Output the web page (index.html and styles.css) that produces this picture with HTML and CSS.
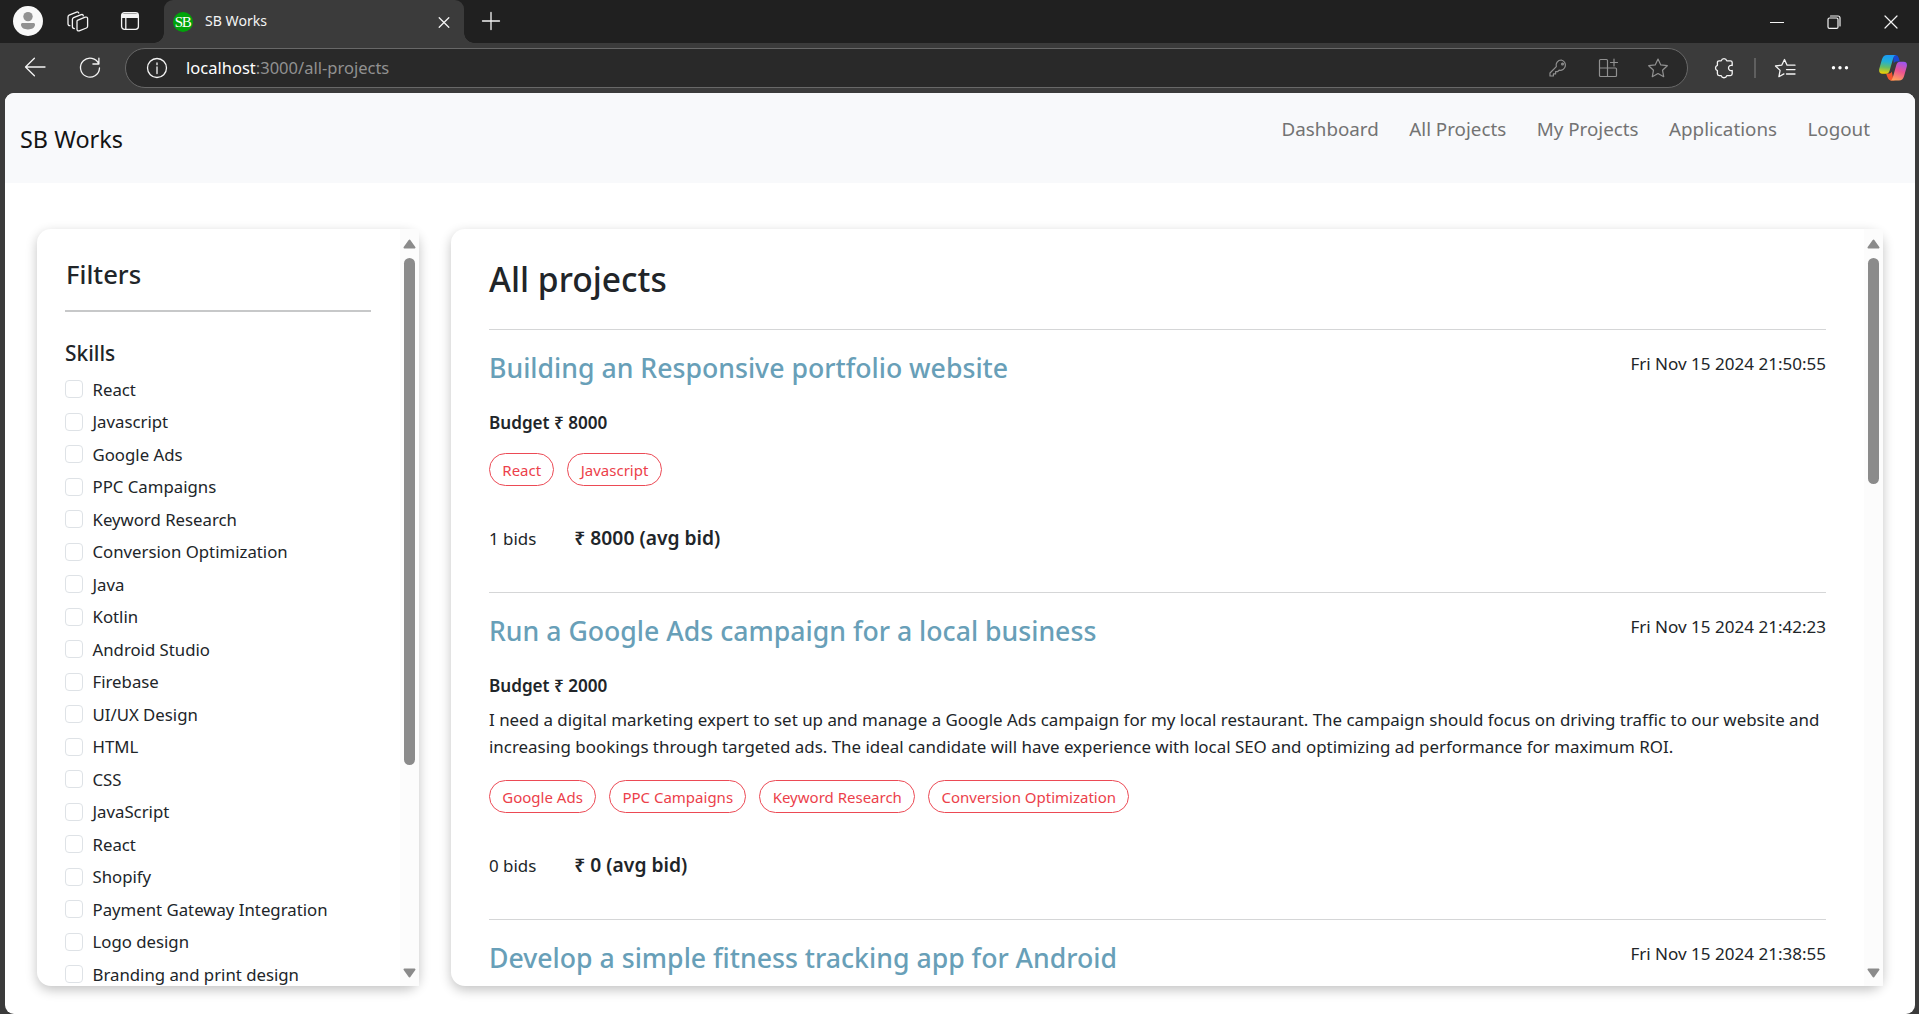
FILE: index.html
```html
<!DOCTYPE html>
<html lang="en">
<head>
<meta charset="utf-8">
<title>SB Works</title>
<link rel="stylesheet" href="styles.css">
</head>
<body>
<header class="tabstrip">
  <svg class="avatar" width="30" height="30" viewBox="0 0 30 30"><circle cx="15" cy="15" r="15" fill="#f8f8f8"/><circle cx="15" cy="10.6" r="4.7" fill="#919191"/><path d="M8 18.6c0-1 .6-1.6 1.6-1.6h10.8c1 0 1.6.6 1.6 1.6 0 3.2-3 4.9-7 4.9s-7-1.700-7-4.900z" fill="#919191"/></svg>
  <svg class="icon ic-workspaces" width="24" height="24" viewBox="0 0 24 24"><path d="M11.400 11.300 19.200 8.200Q21.600 7.600 21.600 9.600V17.200Q21.500 18.500 20.400 19L13.200 21.800Q11.200 22.400 11 20.400V12.600Q11 11.600 11.400 11.300zM8.400 19.600Q6.400 19.600 6.400 17.600V10.600Q6.400 9.300 7.600 8.700L15.200 5.600Q17.100 5.100 17.300 6.800M3.900 16.700Q2 16.700 2 14.800V8Q2 6.700 3.100 6.200L10.600 3.100Q12.200 2.500 12.800 4"/></svg>
  <svg class="icon ic-tabs" width="24" height="24" viewBox="0 0 24 24"><rect x="3.600" y="3.600" width="16.800" height="16.800" rx="2.800"/><path d="M4 4.500h16v4.500H4z" fill="#f4f4f4" stroke="none"/><path d="M7.800 9v11.400"/></svg>
  <div class="tab">
    <span class="favicon">SB</span>
    <span class="tab-title">SB Works</span>
    <svg class="icon tab-close" width="16" height="16" viewBox="0 0 16 16"><path d="m3.200 3.700 9.600 9.600M12.800 3.700l-9.600 9.600"/></svg>
  </div>
  <svg class="icon ic-plus" width="20" height="20" viewBox="0 0 20 20"><path d="M10 1.500v17M1.500 10h17"/></svg>
  <div class="window-controls">
    <svg class="icon" width="14" height="14" viewBox="0 0 14 14"><path d="M.5 7.500h13"/></svg>
    <svg class="icon" width="14" height="14" viewBox="0 0 14 14"><rect x="1" y="3" width="10" height="10.400" rx="1.500"/><path d="M3.500 1h7.500a2 2 0 0 1 2 2v8"/></svg>
    <svg class="icon" width="14" height="14" viewBox="0 0 14 14"><path d="m1 1 12 12M13 1 1 13"/></svg>
  </div>
</header>
<div class="toolbar">
  <svg class="icon ic-back" width="24" height="24" viewBox="0 0 24 24"><path d="M22 11H2.500M11.400 2.300 2.500 11l8.900 8.700"/></svg>
  <svg class="icon ic-reload" width="24" height="24" viewBox="0 0 24 24"><path d="M20.800 8A9.500 9.500 0 1 0 21.500 12M20.900 2.200V8h-6"/></svg>
  <div class="address">
    <svg class="icon" width="24" height="24" viewBox="0 0 24 24"><circle cx="12" cy="12" r="9.500"/><path d="M12 11v6.500M12 7v1.700"/></svg>
    <span class="url"><b>localhost</b>:3000/all-projects</span>
    <svg class="icon dim ic-key" width="24" height="24" viewBox="0 0 24 24"><path d="M15.300 4a5.200 5.200 0 0 0-5 6.700L4 17v3h3.400v-2.100h2.200v-2.200h1.900l1.600-1.500A5.200 5.200 0 1 0 15.300 4z"/><circle cx="16.500" cy="8" r=".9"/></svg>
    <svg class="icon dim" width="24" height="24" viewBox="0 0 24 24"><path d="M11.500 12V4.500Q11.500 3.500 10.500 3.500H4.500Q3.500 3.500 3.500 4.500V19.500Q3.500 20.500 4.500 20.500H19.500Q20.500 20.500 20.500 19.500V13Q20.500 12 19.500 12H3.500M11.500 12v8.500M18 3v7M14.500 6.500h7"/></svg>
    <svg class="icon dim" width="24" height="24" viewBox="0 0 24 24"><path d="m12 3 2.800 5.900 6.500.8-4.800 4.500 1.200 6.500L12 17.500l-5.700 3.200 1.200-6.500-4.800-4.500 6.500-.8z"/></svg>
  </div>
  <svg class="icon ic-puzzle" width="24" height="24" viewBox="0 0 24 24"><path d="M9.200 4.800a2.900 2.900 0 0 1 5.600 0h3.600q1.800 0 1.800 1.800v2.900a2.700 2.700 0 1 0 0 5v3.300q0 1.800-1.800 1.800h-3.600a2.900 2.900 0 0 1-5.600 0H7.200q-1.800 0-1.800-1.800v-3.200a2.800 2.800 0 0 1 0-5.300V6.600q0-1.800 1.800-1.800z"/></svg>
  <span class="divider"></span>
  <svg class="icon ic-favorites" width="24" height="24" viewBox="0 0 24 24"><path d="M19.500 9.200h-5.400l-2.600-5.700-2.800 5.700-6.200.8 4.600 4.400-1.200 6.300 5-2.800M15.500 9.200h6.500M13.500 13.600h8.500M13.500 18h8.500"/></svg>
  <svg class="ic-more" width="24" height="24" viewBox="0 0 24 24" fill="#fff"><circle cx="5.500" cy="11.700" r="1.700"/><circle cx="12" cy="11.700" r="1.700"/><circle cx="18.500" cy="11.700" r="1.700"/></svg>
  <svg class="ic-copilot" width="28" height="26" viewBox="0 0 28 26">
    <defs>
      <linearGradient id="cool" x1=".4" y1="0" x2=".3" y2="1"><stop offset="0" stop-color="#1b9af5"/><stop offset=".35" stop-color="#22b0d4"/><stop offset=".65" stop-color="#65bd66"/><stop offset="1" stop-color="#f5d000"/></linearGradient>
      <linearGradient id="warm" x1=".7" y1="0" x2=".4" y2="1"><stop offset="0" stop-color="#9d55f0"/><stop offset=".5" stop-color="#ec5390"/><stop offset="1" stop-color="#ffa05c"/></linearGradient>
    </defs>
    <path d="M14 0h2.500Q19 .2 19.800 3l1 3.600h-3.600q-1.700 0-2.400 2z" fill="#1947cf"/>
    <path d="M7 18.500h3.500q1.600 0 2.300-2l1.400 7q.4 1.600 1.600 2H12.500Q9.600 25.500 8.600 22.600z" fill="#f4552e"/>
    <path d="M8 0h9q-2 .3-2.700 2.700l-3.700 13q-.9 3-3.600 3H3.400Q-.5 18.700.2 14L3 4.300Q4.300 0 8 0z" fill="url(#cool)"/>
    <path d="M21 6.700h3.600q4 0 3.200 4.700l-2.700 9.600Q23.800 25.600 20 25.600h-9q2-.4 2.700-2.800l3.700-13q.9-3.100 3.600-3.100z" fill="url(#warm)"/>
  </svg>
</div>
<div class="page">
  <nav class="navbar">
    <span class="brand">SB Works</span>
    <div class="links"><a>Dashboard</a><a>All Projects</a><a>My Projects</a><a>Applications</a><a>Logout</a></div>
  </nav>
  <main class="content">
    <aside class="card filters">
      <div class="card-body">
        <h3>Filters</h3>
        <hr>
        <h5>Skills</h5>
        <ul>
          <li><i></i>React</li>
          <li><i></i>Javascript</li>
          <li><i></i>Google Ads</li>
          <li><i></i>PPC Campaigns</li>
          <li><i></i>Keyword Research</li>
          <li><i></i>Conversion Optimization</li>
          <li><i></i>Java</li>
          <li><i></i>Kotlin</li>
          <li><i></i>Android Studio</li>
          <li><i></i>Firebase</li>
          <li><i></i>UI/UX Design</li>
          <li><i></i>HTML</li>
          <li><i></i>CSS</li>
          <li><i></i>JavaScript</li>
          <li><i></i>React</li>
          <li><i></i>Shopify</li>
          <li><i></i>Payment Gateway Integration</li>
          <li><i></i>Logo design</li>
          <li><i></i>Branding and print design</li>
        </ul>
      </div>
      <div class="scrollbar">
        <svg width="13" height="10" viewBox="0 0 13 10"><path d="M6.500 1.500 11.500 8.500H1.500z"/></svg>
        <span class="thumb"></span>
        <svg class="down" width="13" height="10" viewBox="0 0 13 10"><path d="M6.500 8.500 11.500 1.500H1.500z"/></svg>
      </div>
    </aside>
    <section class="card projects">
      <div class="card-body">
        <h2>All projects</h2>
        <article>
          <div class="head"><h3>Building an Responsive portfolio website</h3><time>Fri Nov 15 2024 21:50:55</time></div>
          <h6>Budget ₹ 8000</h6>
          <div class="tags"><span>React</span><span>Javascript</span></div>
          <div class="bids"><span>1 bids</span><b>₹ 8000 (avg bid)</b></div>
        </article>
        <article>
          <div class="head"><h3>Run a Google Ads campaign for a local business</h3><time>Fri Nov 15 2024 21:42:23</time></div>
          <h6>Budget ₹ 2000</h6>
          <p>I need a digital marketing expert to set up and manage a Google Ads campaign for my local restaurant. The campaign should focus on driving traffic to our website and<br>increasing bookings through targeted ads. The ideal candidate will have experience with local SEO and optimizing ad performance for maximum ROI.</p>
          <div class="tags"><span>Google Ads</span><span>PPC Campaigns</span><span>Keyword Research</span><span>Conversion Optimization</span></div>
          <div class="bids"><span>0 bids</span><b>₹ 0 (avg bid)</b></div>
        </article>
        <article>
          <div class="head"><h3>Develop a simple fitness tracking app for Android</h3><time>Fri Nov 15 2024 21:38:55</time></div>
        </article>
      </div>
      <div class="scrollbar">
        <svg width="13" height="10" viewBox="0 0 13 10"><path d="M6.500 1.500 11.500 8.500H1.500z"/></svg>
        <span class="thumb"></span>
        <svg class="down" width="13" height="10" viewBox="0 0 13 10"><path d="M6.500 8.500 11.500 1.500H1.500z"/></svg>
      </div>
    </section>
  </main>
</div>
</body>
</html>
```
FILE: styles.css
```css
* { box-sizing: border-box; margin: 0; padding: 0; }
html, body { height: 1014px; overflow: hidden; }
body {
  display: flex;
  flex-direction: column;
  background: #3b3b3b;
  color: #212529;
  font: 16.920px "Noto Sans", "Open Sans", sans-serif;
}
svg { flex: none; display: block; }
.icon { fill: none; stroke: #f4f4f4; stroke-width: 1.300; stroke-linejoin: round; stroke-linecap: round; }
.icon.dim { stroke: #919191; stroke-width: 1.200; }

/* browser tab strip */
.tabstrip { flex: none; display: flex; align-items: center; height: 43px; padding-left: 13px; background: #202020; }
.avatar { margin-top: -1px; }
.ic-workspaces { margin: -1px 0 0 23px; }
.ic-tabs { margin: -1px 0 0 28px; }
.tab {
  position: relative;
  display: flex;
  align-items: center;
  align-self: stretch;
  width: 300px;
  margin-left: 22px;
  padding: 0 12px 0 9px;
  border-radius: 9px 9px 0 0;
  background: #3b3b3b;
  color: #f4f4f4;
}
.tab::before, .tab::after { content: ""; position: absolute; bottom: 0; width: 10px; height: 10px; }
.tab::before { left: -10px; background: radial-gradient(circle at 0 0, #202020 9.500px, #3b3b3b 10px); }
.tab::after { right: -10px; background: radial-gradient(circle at 100% 0, #202020 9.500px, #3b3b3b 10px); }
.favicon {
  width: 20px;
  height: 20px;
  border-radius: 50%;
  background: #00a30a;
  color: #fff;
  font: 15px/20px "Liberation Serif", serif;
  letter-spacing: -1.500px;
  text-align: center;
  text-indent: -1px;
}
.tab-title { margin-left: 12px; font-size: 14.100px; line-height: 20px; margin-top: -2px; }
.tab-close { margin-left: auto; }
.ic-plus { margin: -1px 0 0 16.500px; }
.window-controls { display: flex; margin-left: auto; }
.window-controls svg { margin: 0 21.500px; stroke-width: 1.200; }

/* browser toolbar */
.toolbar { flex: none; display: flex; align-items: center; height: 50px; padding-left: 23px; }
.ic-reload { margin-left: 31px; }
.address {
  display: flex;
  align-items: center;
  gap: 26px;
  width: 1563px;
  height: 40px;
  margin-left: 23px;
  padding: 0 17.500px 0 19px;
  border: 1px solid #686868;
  border-radius: 20px;
  background: #292929;
}
.url { margin: -2px 0 0 -9px; font-size: 16.520px; color: #919191; }
.url b { font-weight: 400; color: #fff; }
.ic-key { margin-left: auto; }
.ic-puzzle { margin-left: 23.500px; }
.divider { width: 2px; height: 20px; margin-left: 18.500px; background: #5f5f5f; }
.ic-favorites { margin-left: 17px; }
.ic-more { margin-left: 31px; }
.ic-copilot { margin-left: 27px; }

/* page */
.page { flex: 1; display: flex; flex-direction: column; margin: 0 4px 0 5px; border-radius: 9px; background: #fff; overflow: hidden; }
.navbar { flex: none; display: flex; justify-content: space-between; align-items: center; height: 90px; padding: 0 45px 0 15px; background: #f8f9fb; }
.brand { padding-top: 2px; font-size: 23.400px; line-height: 34px; color: #141414; }
.links { display: flex; gap: 30.500px; padding-bottom: 18px; font-size: 18.800px; line-height: 28px; color: #737373; }

.content { display: flex; gap: 32px; padding: 46px 32px 0 32px; }
.card { display: flex; height: 756.500px; border-radius: 14px; box-shadow: 0 4px 12px rgba(0, 0, 0, .24); background: #fff; }
.card-body { flex: 1; min-width: 0; overflow: hidden; border-radius: 14px 0 0 14px; }
.scrollbar { flex: none; display: flex; flex-direction: column; align-items: center; width: 19px; padding: 10px 0 8px; background: #fcfcfc; }
.scrollbar svg { fill: #8b8b8b; stroke: #8b8b8b; stroke-width: 2; stroke-linejoin: round; }
.scrollbar .down { margin-top: auto; }
.thumb { width: 11px; margin-top: 9px; border-radius: 6px; background: #8b8b8b; }

.filters { flex: none; width: 382px; }
.filters .card-body { padding: 29px 29px 0 28px; }
.filters .thumb { height: 507px; }
.filters h3 { padding-left: 1px; font-size: 25.600px; font-weight: 500; line-height: 34px; }
.filters hr { height: 2px; margin: 18px 0 28px; border: 0; background: #c7c8c9; }
.filters h5 { font-size: 20.900px; font-weight: 500; line-height: 27px; }
.filters ul { margin-top: 6px; list-style: none; }
.filters li { display: flex; align-items: center; gap: 9.500px; height: 32.500px; font-size: 16.780px; }
.filters i { width: 18px; height: 18px; border: 1px solid #dee2e6; border-radius: 4px; }

.projects { flex: 1; min-width: 0; }
.projects .card-body { padding: 28px 38px 0; }
.projects .thumb { height: 226px; }
.projects h2 { margin-bottom: 28px; font-size: 33.600px; font-weight: 500; line-height: 44px; }
article { border-top: 1px solid #d5d6d7; padding: 20px 0 38px; }
.head { display: flex; justify-content: space-between; }
.head h3 { font-size: 26.660px; font-weight: 500; line-height: 36px; color: #689fb8; }
time { font-size: 17.050px; line-height: 27px; }
h6 { margin-top: 23px; font-size: 17.120px; font-weight: 600; line-height: 27px; }
article p { margin: 7px 0 20px; font-size: 16.910px; line-height: 27px; white-space: nowrap; }
.tags { display: flex; gap: 13px; }
h6 + .tags { margin-top: 17px; }
.tags span { height: 33px; padding: 0 12.300px; border: 1px solid #ec4a55; border-radius: 17px; color: #ec3f4b; font-size: 15px; line-height: 32px; }
.bids { display: flex; align-items: baseline; gap: 38px; margin-top: 37px; line-height: 30px; }
.bids b { font-size: 19.250px; font-weight: 600; line-height: 30px; }
```
